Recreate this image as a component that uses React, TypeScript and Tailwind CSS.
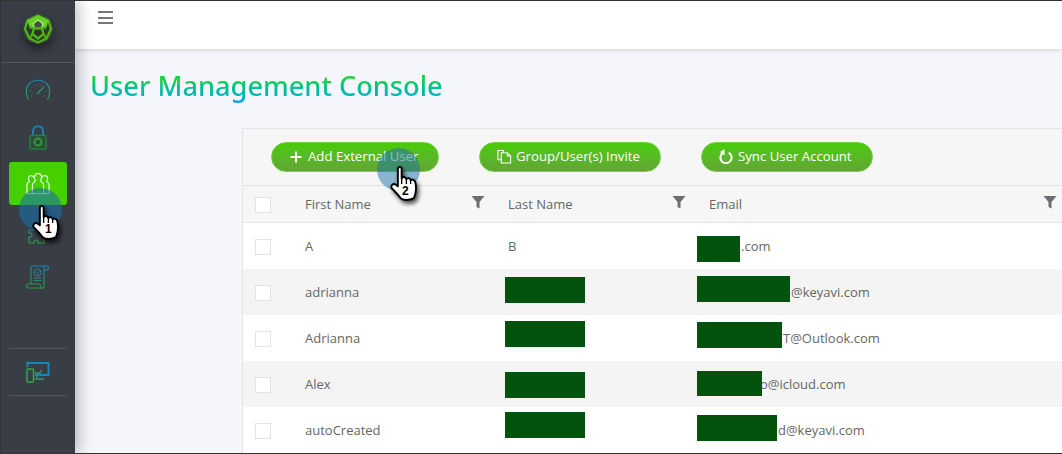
const Grad = ({ id }: { id: string }) => (
  <defs>
    <linearGradient id={id} x1="0" y1="0" x2="0" y2="1">
      <stop offset="0" stopColor="#1b86b8" />
      <stop offset="1" stopColor="#2f9c2f" />
    </linearGradient>
  </defs>
);

const Logo = () => (
  <svg width="30" height="30" viewBox="0 0 30 30" fill="none" className="block">
    <path d="M15 1.5 L25.5 6.5 L28 15 L23.5 24.5 L15 28.5 L6.5 24.5 L2 15 L4.5 6.5 Z" fill="#2f3a2c" stroke="#4cb512" strokeWidth="2.4" strokeLinejoin="round" />
    <path d="M15 1.5 L25.5 6.5 L23.5 13 L6.5 13 L4.5 6.5 Z" fill="#66d028" />
    <path d="M15 6 L20 9.8 L18.3 14.5 L11.7 14.5 L10 9.8 Z" fill="#46503f" stroke="#a8ee70" strokeWidth="1.4" strokeLinejoin="round" />
    <path d="M11 14.5 L9.5 20 L15 24.5 L20.5 20 L19 14.5 Z" fill="#2a3226" stroke="#4cb512" strokeWidth="2.4" strokeLinejoin="round" />
    <path d="M9.5 20 L6.5 24.5 M20.5 20 L23.5 24.5 M11 14.5 L6.5 13 M19 14.5 L23.5 13" stroke="#4cb512" strokeWidth="2.2" />
  </svg>
);

const Gauge = () => (
  <svg width="26" height="22" viewBox="0 0 26 22" fill="none" className="block">
    <Grad id="g1" />
    <path d="M3.5 21 C0 14 1 8 4 5 C9 0 17 0 22 5 C25 8 26 14 22.5 21" stroke="url(#g1)" strokeWidth="1.2" />
    <path d="M6 17 h1 M4.5 12 h1.5 M6.5 7.5 l1 1 M13 4.5 v1.5 M19 7.5 l-1 1 M20.5 12 h1 M19 17 h1 M9.5 5.5 l.5 1 M16.5 5.5 l-.5 1" stroke="url(#g1)" strokeWidth="1" />
    <path d="M12 15 L19 8" stroke="#1f9d80" strokeWidth="1.2" />
  </svg>
);

const Lock = () => (
  <svg width="18" height="25" viewBox="0 0 18 25" fill="none" className="block">
    <path d="M4 11 V6.5 C4 -0.5 14 -0.5 14 6.5 V11" stroke="#1b7fb0" strokeWidth="2" />
    <rect x="1" y="10.5" width="16" height="13.5" rx="1" stroke="#22803a" strokeWidth="1.5" fill="#2f4b3c" />
    <circle cx="9" cy="17" r="3.5" stroke="#2f9c2f" strokeWidth="2" />
  </svg>
);

const Puzzle = () => (
  <svg width="22" height="22" viewBox="0 0 22 22" fill="none" className="block">
    <Grad id="g3" />
    <path d="M5 7 H9 C8 2 14 2 13 7 H17 V11 C21 10 21 16 17 15 V20 H11 C12 16 6 16 7 20 H2 V14 C6 15 6 9 2 10 V7 Z" stroke="url(#g3)" strokeWidth="1.2" />
  </svg>
);

const Scroll = () => (
  <svg width="24" height="24" viewBox="0 0 24 24" fill="none" className="block">
    <Grad id="g4" />
    <path d="M5 19 V3 C5 1.5 6 1 7 1 H21 C23 1 23 5 21 5 H18 M7 1 H17 C18 1 18 3 18 5 V21 C18 23 16 23.5 15 23 H2 C0 23 0 19 2 19 H13 C14 19 15 21 15 23" stroke="url(#g4)" strokeWidth="1.1" />
    <circle cx="11.5" cy="7.5" r="3.5" stroke="#1d8aa8" strokeWidth="1" />
    <path d="M10 7.5 l1.2 1.2 l2 -2.6" stroke="#1d8aa8" strokeWidth="1" />
    <path d="M7.5 13 h8 M7.5 15.5 h8" stroke="#258f72" strokeWidth="1" />
  </svg>
);

const Devices = () => (
  <svg width="24" height="21" viewBox="0 0 24 21" fill="none" className="block">
    <path d="M1.5 5 V1 H22.5 V13 H9" stroke="#1b86b8" strokeWidth="2" />
    <path d="M11 13 V16 M9 17 H18 M9 11 H14 L16 8" stroke="#2f9c70" strokeWidth="1.3" />
    <rect x="1" y="7" width="6.5" height="13" rx="1" stroke="#2da84a" strokeWidth="1.5" />
  </svg>
);

const Funnel = () => (
  <svg width="14" height="14" viewBox="0 0 14 14" className="block">
    <path d="M0.5 1 H13.5 L8.5 7 V13.5 L5.5 12 V7 Z" fill="#6b6f75" />
  </svg>
);

const Plus = () => (
  <svg width="12" height="12" viewBox="0 0 12 12" className="block">
    <path d="M5 0.5 H7 V5 H11.5 V7 H7 V11.5 H5 V7 H0.5 V5 H5 Z" fill="#fff" />
  </svg>
);

const Copy = () => (
  <svg width="15" height="15" viewBox="0 0 16 15" fill="none" className="block">
    <path d="M4.5 11 H1 V1 H7 V3" stroke="#fff" strokeWidth="1.1" />
    <path d="M4.5 3.5 H11 L14.5 7 V14.5 H4.5 Z M11 3.5 V7 H14.5" stroke="#fff" strokeWidth="1.1" />
  </svg>
);

const Sync = () => (
  <svg width="14" height="15" viewBox="0 0 14 15" fill="none" className="block">
    <path d="M4 3.8 A5.6 5.6 0 1 0 9.6 3.6" stroke="#fff" strokeWidth="2" />
    <path d="M5.5 0 V6.5 L1 3 Z" fill="#fff" />
  </svg>
);

const Hand = () => (
  <svg width="29" height="36" viewBox="0 0 30 38" className="block" style={{ filter: "drop-shadow(2px 3px 2px rgba(0,0,0,.7))" }}>
    <path
      d="M8 3 C8 0.5 12 0.5 12 3 V13 C13 11 16.5 11 17 14 C18 12 21 12.5 21.5 15 C23 13.5 26 14.5 26.5 17.5 C27.5 22 27.5 28 25 34 C20 36.5 14 36.5 11 34 C8 30 5 27 1.5 23.5 C0 21 3 18 5.5 19.5 L8 21.5 Z"
      fill="#fff"
      stroke="#000"
      strokeWidth="2"
      strokeLinejoin="round"
    />
    <path d="M12 13 V19 M17 14 V19 M21.5 15 V19" stroke="#000" strokeWidth="1.4" />
  </svg>
);

const Redact = ({ className }: { className: string }) => <div className={`absolute bg-[#03530f] ${className}`} />;

const Check = () => <div className="w-4 h-4 bg-white border border-[#e3e3e3]" />;

const rows = [
  { first: "A", last: "B", email: ".com", pad: "pl-[32px]", lastBox: "", emailBox: "left-[-12px] top-[13px] h-[26px] w-[43px]" },
  { first: "adrianna", last: "", email: "@keyavi.com", pad: "pl-[82px]", lastBox: "top-[8px]", emailBox: "left-[-12px] top-[7px] h-[26px] w-[93px]" },
  { first: "Adrianna", last: "", email: "T@Outlook.com", pad: "pl-[74px]", lastBox: "top-[6px]", emailBox: "left-[-12px] top-[7px] h-[26px] w-[85px]" },
  { first: "Alex", last: "", email: "o@icloud.com", pad: "pl-[51px]", lastBox: "top-[11px]", emailBox: "left-[-12px] top-[10px] h-[25px] w-[65px]" },
  { first: "autoCreated", last: "", email: "d@keyavi.com", pad: "pl-[69px]", lastBox: "top-[5px]", emailBox: "left-[-12px] top-[8px] h-[26px] w-[80px]" },
];

const btn =
  "h-[30px] rounded-full flex items-center border border-[#6fd33f] bg-gradient-to-b from-[#47cc00] to-[#62a532] text-white text-[13.2px]";

export default function App() {
  return (
    <div
      className="w-[1062px] h-[454px] overflow-hidden flex bg-[#f4f6fb] border-t border-l border-b border-[#333] text-[#666]"
      style={{ fontFamily: '"Open Sans", "Noto Sans", sans-serif' }}
    >
      <aside className="w-[74px] shrink-0 bg-[#383d46] flex flex-col items-center relative z-10 shadow-[4px_0_14px_rgba(0,0,0,0.25)]">
        <div className="h-[62px] w-full border-b border-[#535860] flex items-center justify-center pb-[6px]">
          <div className="rounded-full shadow-[0_5px_8px_rgba(0,0,0,0.45)] bg-[#3a3f48]">
            <Logo />
          </div>
        </div>
        <div className="h-[16px]" />
        <Gauge />
        <div className="h-[24px]" />
        <Lock />
        <div className="mt-[12px] w-[58px] h-[43px] bg-[#47d000] rounded-[3px] flex items-center justify-center">
          <svg width="24" height="23" viewBox="0 0 26 24" fill="none">
            <path d="M1 23 V13 C1 11 3.5 11 3.5 9.5 C1.5 6 3 3.5 5.5 3.5 C7 3.5 8 4.2 8.5 5.5 M25 23 V13 C25 11 22.5 11 22.5 9.5 C24.5 6 23 3.5 20.5 3.5 C19 3.5 18 4.2 17.5 5.5" stroke="#e8f8e0" strokeWidth="1.3" />
            <path d="M7 23 V13 C7 11 10 11 10 9 C8 4.5 10 1 13 1 C16 1 18 4.5 16 9 C16 11 19 11 19 13 V23 M1 23 H25" stroke="#e8f8e0" strokeWidth="1.3" />
          </svg>
        </div>
        <div className="mt-[18px]"><Puzzle /></div>
        <div className="mt-[20px]"><Scroll /></div>
        <div className="w-[58px] border-t border-[#535860] mt-[59px]" />
        <div className="h-[46px] flex items-center justify-center"><Devices /></div>
        <div className="w-[58px] border-t border-[#535860]" />
      </aside>

      <main className="flex-1 min-w-0 flex flex-col">
        <header className="h-[48px] shrink-0 bg-white shadow-[0_1px_4px_rgba(0,0,0,0.15)] pl-[23px] pt-[10px]">
          <div className="w-[15px] flex flex-col gap-[3.5px]">
            <div className="h-[2px] bg-[#777]" />
            <div className="h-[2px] bg-[#777]" />
            <div className="h-[2px] bg-[#777]" />
          </div>
        </header>

        <h1
          className="ml-[15px] mt-[17px] mb-[2px] h-[40px] text-[27.2px] font-medium leading-[40px] w-fit bg-gradient-to-b from-[#1fcf3f] from-35% to-[#08a4e4] to-90% bg-clip-text text-transparent"
          style={{ fontFamily: '"Noto Sans", sans-serif' }}
        >
          User Management Console
        </h1>

        <section className="ml-[167px] mt-[20px] flex-1 bg-white border-l border-t border-[#e3e5ea]">
          <div className="h-[57px] bg-[#f6f6f6] border-b border-[#e3e3e3] flex items-center pl-[28px] pb-[1px]">
            <button className={`${btn} w-[168px] pl-[18px] gap-[6px]`}><Plus />Add External User</button>
            <button className={`${btn} w-[182px] ml-[40px] pl-[17px] gap-[4px]`}><Copy />Group/User(s) Invite</button>
            <button className={`${btn} w-[172px] ml-[40px] pl-[17px] gap-[5px]`}><Sync />Sync User Account</button>
          </div>
          <div className="h-[37px] pt-[2px] bg-[#f6f6f6] border-b border-[#e3e3e3] grid grid-cols-[62px_203px_201px_1fr] items-center text-[13px]">
            <div className="pl-[12px]"><Check /></div>
            <div className="flex justify-between pr-[23px]"><span>First Name</span><Funnel /></div>
            <div className="flex justify-between pr-[23px]"><span>Last Name</span><Funnel /></div>
            <div className="flex justify-between pr-[5px]"><span>Email</span><Funnel /></div>
          </div>
          {rows.map((r, i) => (
            <div key={r.first} className={`h-[46px] grid grid-cols-[62px_203px_201px_1fr] items-center text-[13px] ${i % 2 ? "bg-[#f4f4f4]" : "bg-white"}`}>
              <div className="pl-[12px] pt-[2px]"><Check /></div>
              <div className="pt-[2px]">{r.first}</div>
              <div className="relative h-full flex items-center pt-[2px]">
                {r.last}
                {r.lastBox && <Redact className={`left-[-3px] w-[80px] h-[26px] ${r.lastBox}`} />}
              </div>
              <div className="relative h-full flex items-center pt-[2px]">
                <span className={r.pad}>{r.email}</span>
                <Redact className={r.emailBox} />
              </div>
            </div>
          ))}
        </section>
      </main>

      <div className="absolute left-[19px] top-[188px] w-[43px] h-[43px] rounded-full bg-[#1b6fa8]/60 z-20" />
      <div className="absolute left-[32px] top-[205px] z-30">
        <Hand />
        <span className="absolute left-[13px] top-[17px] text-[12px] font-bold text-black leading-[14px]" style={{ fontFamily: '"Liberation Sans", sans-serif' }}>1</span>
      </div>
      <div className="absolute left-[377px] top-[148px] w-[43px] h-[43px] rounded-full bg-[#1b6fa8]/50 z-20" />
      <div className="absolute left-[390px] top-[166px] z-30">
        <Hand />
        <span className="absolute left-[12px] top-[18px] text-[12px] font-bold text-black leading-[14px]" style={{ fontFamily: '"Liberation Sans", sans-serif' }}>2</span>
      </div>
    </div>
  );
}
